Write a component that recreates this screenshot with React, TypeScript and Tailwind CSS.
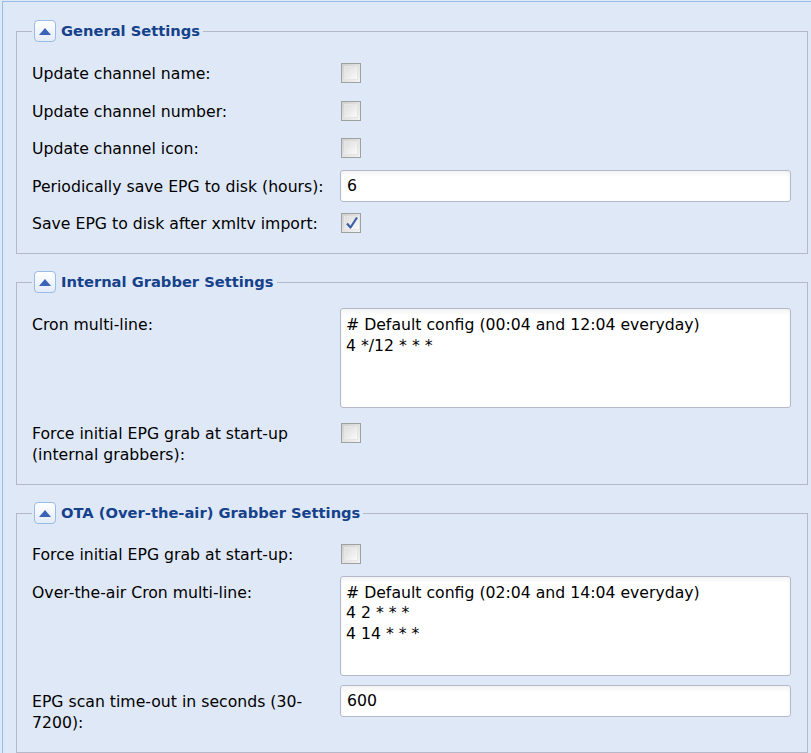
import type { ReactNode } from 'react'

const font = { fontFamily: '"DejaVu Sans", Verdana, sans-serif' }

function CollapseButton() {
  return (
    <span className="h-[22px] w-[22px] rounded-[4px] border border-[#99bbe8] bg-gradient-to-b from-white to-[#e4ecf8] flex items-center justify-center shrink-0">
      <svg width="12" height="7" viewBox="0 0 12 7">
        <path d="M6 0 L12 7 L0 7 Z" fill="#3b63b8" />
      </svg>
    </span>
  )
}

function Checkbox({ checked = false }: { checked?: boolean }) {
  return (
    <span className="mt-[6px] ml-[1px] h-[20px] w-[20px] border border-[#a0a0a0] bg-gradient-to-br from-[#cfcfcf] to-[#f4f4f4] p-[2px] flex shrink-0">
      <span className="flex-1 border border-[#e6e6e6] bg-gradient-to-br from-[#dedede] to-[#fafafa] flex items-center justify-center">
        {checked && (
          <svg width="14" height="14" viewBox="0 0 14 14">
            <path d="M2 7.5 L5.5 11.5 L12 1.5" fill="none" stroke="#3d5ea8" strokeWidth="2.2" strokeLinejoin="round" />
          </svg>
        )}
      </span>
    </span>
  )
}

function TextInput({ value }: { value: string }) {
  return (
    <div className="flex-1 h-[32px] rounded-[3px] border border-[#b5b8c8] bg-white shadow-[inset_0_3px_4px_rgba(0,0,0,0.05)] px-[6px] leading-[30px] text-black">
      {value}
    </div>
  )
}

function TextArea({ lines }: { lines: string[] }) {
  return (
    <div className="flex-1 h-[100px] rounded-[3px] border border-[#b5b8c8] bg-white shadow-[inset_0_3px_4px_rgba(0,0,0,0.05)] px-[5px] pt-[6px] leading-[20.5px] text-black">
      {lines.map((l) => (
        <div key={l}>{l}</div>
      ))}
    </div>
  )
}

function Row({ label, children, tall = false }: { label: ReactNode; children: ReactNode; tall?: boolean }) {
  return (
    <div className={`flex items-start ${tall ? 'mb-[9px]' : 'mb-[4.5px]'} last:mb-0`}>
      <div className="w-[308px] shrink-0 py-[6px] leading-[21px] text-black pr-[6px]">{label}</div>
      {children}
    </div>
  )
}

function Section({ title, children, top }: { title: string; children: ReactNode; top: string }) {
  return (
    <fieldset className={`ml-[16px] mr-[3px] border border-[#b5b8c8] pl-[15px] pr-[16px] pb-[13px] ${top}`}>
      <legend className="px-[2px] flex items-center gap-[5px] h-[24px]">
        <CollapseButton />
        <span className="font-bold text-[#15428b] text-[14.7px] pr-[1px]">{title}</span>
      </legend>
      {children}
    </fieldset>
  )
}

export default function App() {
  return (
    <div className="w-[811px] h-[753px] bg-[#dfe8f6] overflow-hidden text-[15.7px]" style={font}>
      <div className="ml-[2px] mt-[1px] h-full border-l border-t border-[#99bbe8]">
        <div className="-ml-[3px]">
          <Section title="General Settings" top="mt-[17px] pt-[14px]">
            <Row label="Update channel name:"><Checkbox /></Row>
            <Row label="Update channel number:"><Checkbox /></Row>
            <Row label="Update channel icon:"><Checkbox /></Row>
            <Row label="Periodically save EPG to disk (hours):"><TextInput value="6" /></Row>
            <Row label="Save EPG to disk after xmltv import:"><Checkbox checked /></Row>
          </Section>

          <Section title="Internal Grabber Settings" top="mt-[16px] pt-[14px]">
            <Row label="Cron multi-line:" tall>
              <TextArea lines={['# Default config (00:04 and 12:04 everyday)', '4 */12 * * *']} />
            </Row>
            <Row label={<>Force initial EPG grab at start-up<br />(internal grabbers):</>}><Checkbox /></Row>
          </Section>

          <Section title="OTA (Over-the-air) Grabber Settings" top="mt-[16px] pt-[13px]">
            <Row label="Force initial EPG grab at start-up:"><Checkbox /></Row>
            <Row label="Over-the-air Cron multi-line:" tall>
              <TextArea lines={['# Default config (02:04 and 14:04 everyday)', '4 2 * * *', '4 14 * * *']} />
            </Row>
            <Row label="EPG scan time-out in seconds (30-7200):"><TextInput value="600" /></Row>
          </Section>
        </div>
      </div>
    </div>
  )
}
